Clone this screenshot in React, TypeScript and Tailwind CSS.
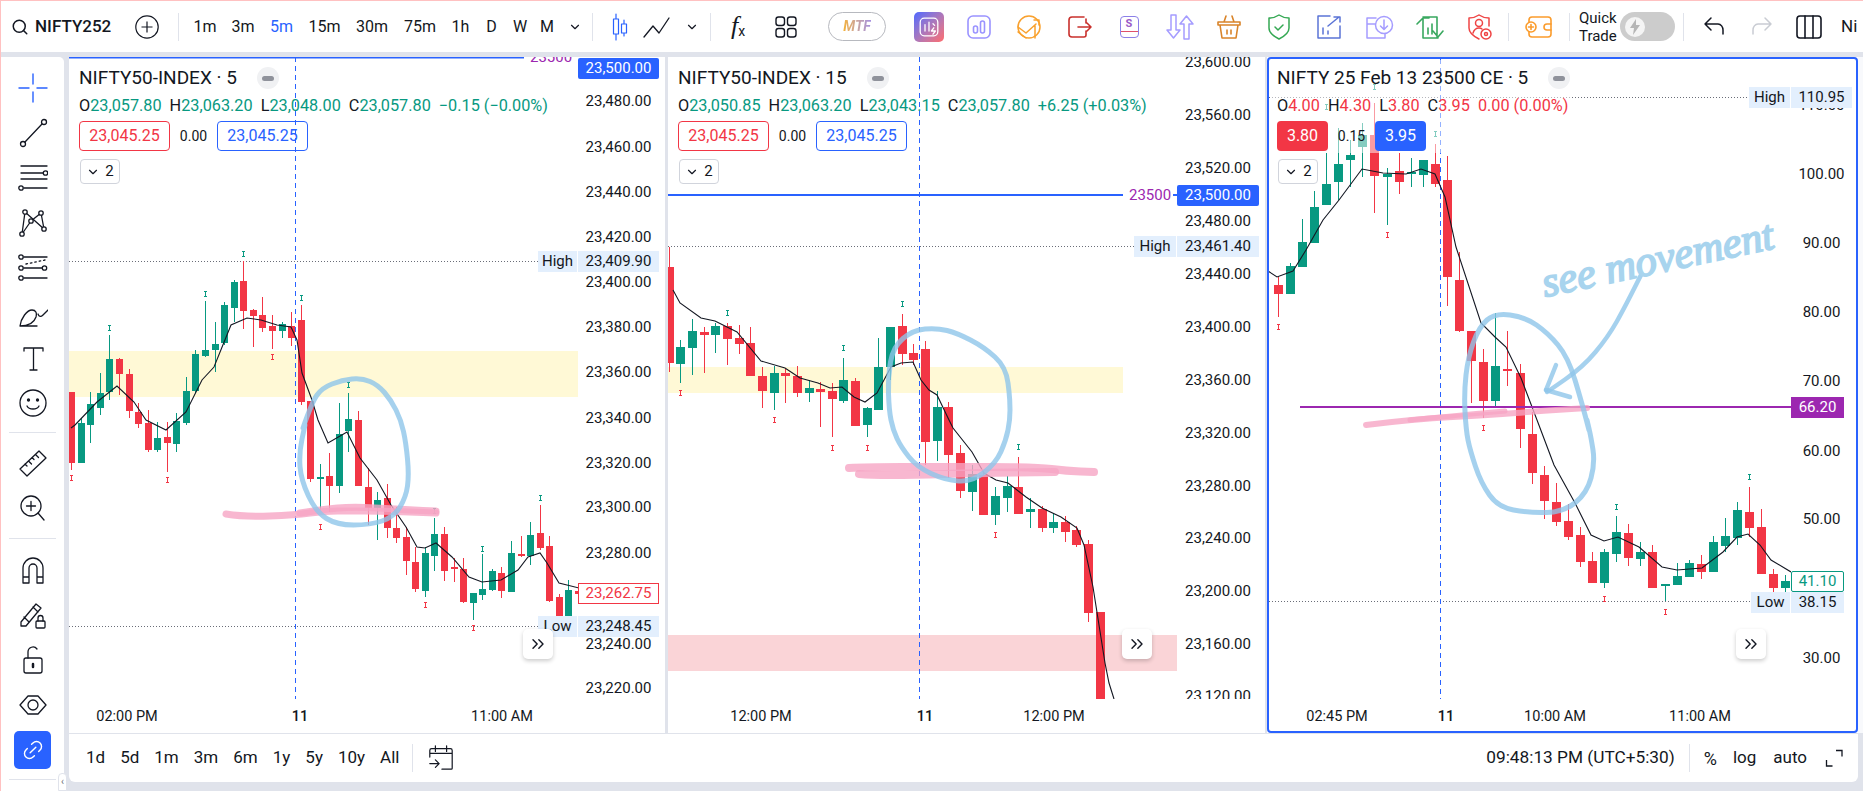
import React from 'react';
import { ChevronDown, ChevronsRight, Link2, Search } from 'lucide-react';

type Candle = [number, number, number, number, 'g' | 'r', number?];

const GREEN = '#089981';
const RED = '#f23645';
const BLUE = '#2962ff';

interface Tag {
  y: number;
  x: number;
  w: number;
  text: string;
  className: string;
}

interface PaneData {
  x: number;
  w: number;
  plotRight: number;
  candleX: number;
  step: number;
  bodyW: number;
  candles: Candle[];
  ma: string;
  ticks: [string, number][];
  tickX: number;
  tags: Tag[];
  times: [string, number, boolean?][];
  arrowBtnX: number;
}

const ma1 =
  '71,428 75,425 97,402 117,386 134,402 146,420 166,430 186,412 202,380 214,367 231,325 247,318 261,320 277,325 291,327 297,340 302,373 312,400 318,420 328,443 347,432 360,458 377,480 391,505 406,527 417,547 425,548 436,543 452,557 469,577 482,582 501,580 518,570 528,557 540,553 547,563 559,583 579,588';
const ma2 =
  '673,290 680,303 701,318 715,321 737,332 761,361 785,368 800,378 818,383 830,388 842,387 854,397 865,402 877,393 891,367 901,363 913,362 921,380 929,390 937,395 949,420 953,428 972,452 984,473 996,480 1008,483 1026,497 1042,508 1061,517 1077,528 1084,545 1093,587 1105,663 1109,683 1114,699';
const ma3 =
  '1268,271 1277,277 1293,271 1306,250 1323,220 1339,200 1362,169 1383,173 1406,174 1421,169 1435,174 1445,197 1456,247 1481,323 1495,337 1506,347 1521,378 1537,420 1554,465 1575,503 1591,535 1604,541 1618,537 1639,547 1662,567 1677,570 1702,568 1723,552 1737,537 1748,534 1760,545 1771,560 1791,572';

const candles1: Candle[] = [
  [392, 392, 463, 470, 'r', 478], [418, 423, 463, 463, 'g'], [392, 404, 425, 443, 'g'], [373, 393, 408, 415, 'g'],
  [335, 359, 392, 400, 'g', 328], [358, 359, 374, 395, 'r'], [369, 374, 411, 418, 'r'], [403, 412, 424, 428, 'r'],
  [410, 423, 450, 452, 'r'], [422, 438, 450, 452, 'g'], [422, 437, 443, 472, 'r', 480], [413, 421, 444, 452, 'g'],
  [377, 391, 423, 425, 'g'], [350, 354, 391, 393, 'g'], [301, 350, 356, 357, 'g', 294], [322, 344, 350, 372, 'g'],
  [302, 305, 343, 345, 'g'], [280, 282, 308, 322, 'g'], [261, 281, 311, 329, 'r', 254], [309, 310, 316, 347, 'r'],
  [297, 315, 328, 332, 'r'], [315, 326, 331, 349, 'r', 357], [322, 324, 331, 338, 'g'], [312, 326, 338, 346, 'r'],
  [305, 320, 402, 405, 'r', 298], [401, 401, 479, 482, 'r'], [464, 477, 478, 510, 'g', 527], [453, 476, 486, 512, 'r'],
  [403, 434, 486, 493, 'g'], [393, 419, 431, 452, 'g', 385], [411, 420, 486, 486, 'r'], [468, 487, 508, 525, 'r'],
  [492, 500, 508, 540, 'g'], [484, 498, 528, 538, 'r'], [507, 528, 538, 543, 'r'], [527, 537, 561, 575, 'r'],
  [547, 562, 589, 592, 'r'], [547, 553, 591, 597, 'g', 605], [518, 534, 556, 571, 'g', 511], [527, 534, 571, 581, 'r'],
  [558, 567, 568, 582, 'r'], [558, 569, 602, 603, 'r'], [593, 593, 603, 620, 'g', 628], [554, 589, 595, 600, 'g', 549],
  [569, 571, 590, 591, 'g'], [567, 573, 591, 598, 'r'], [541, 553, 592, 592, 'g'], [536, 554, 556, 557, 'r'],
  [522, 535, 556, 565, 'g'], [505, 533, 548, 550, 'r', 498], [536, 546, 601, 602, 'r'], [594, 597, 625, 625, 'r'],
  [580, 590, 625, 625, 'g'], [590, 591, 594, 596, 'r'],
];

const candles2: Candle[] = [
  [247, 267, 363, 372, 'r'], [340, 347, 364, 383, 'g', 393], [319, 331, 348, 375, 'g'], [327, 332, 335, 373, 'r'],
  [323, 326, 335, 353, 'g'], [323, 326, 339, 365, 'r', 313], [325, 338, 344, 354, 'r'], [327, 343, 376, 376, 'r'],
  [367, 376, 391, 408, 'r'], [366, 373, 393, 410, 'g', 420], [369, 373, 376, 403, 'r'], [366, 376, 393, 397, 'r'],
  [380, 388, 393, 402, 'g'], [382, 389, 392, 427, 'r'], [383, 391, 399, 437, 'r', 448], [358, 380, 401, 403, 'g', 348],
  [378, 381, 426, 426, 'r'], [407, 408, 425, 437, 'g', 448], [338, 367, 410, 410, 'g'], [327, 327, 367, 380, 'g'],
  [314, 326, 354, 365, 'r', 304], [344, 353, 360, 365, 'r'], [341, 349, 442, 465, 'r'], [391, 407, 441, 461, 'g'],
  [402, 407, 455, 478, 'r'], [445, 453, 491, 498, 'r'], [465, 474, 492, 511, 'g'], [473, 475, 515, 515, 'r'],
  [487, 496, 515, 525, 'g', 535], [476, 486, 498, 512, 'g'], [457, 487, 514, 514, 'r', 447], [498, 509, 512, 528, 'g'],
  [506, 509, 528, 532, 'r'], [513, 522, 528, 533, 'g'], [516, 522, 532, 542, 'r'], [526, 530, 545, 547, 'r'],
  [540, 544, 613, 622, 'r'], [612, 612, 705, 705, 'r'],
];

const candles3: Candle[] = [
  [277, 285, 294, 317, 'r', 327], [263, 266, 294, 294, 'g'], [219, 242, 267, 267, 'g'], [191, 207, 243, 243, 'g'],
  [153, 184, 205, 205, 'g', 107], [128, 164, 182, 200, 'g'], [140, 155, 160, 187, 'g'], [123, 135, 147, 177, 'g'],
  [103, 135, 176, 213, 'r', 87], [168, 174, 177, 225, 'g', 235], [153, 171, 182, 194, 'r'], [158, 172, 174, 187, 'g'],
  [160, 160, 175, 187, 'g'], [144, 164, 184, 187, 'r', 134], [156, 180, 277, 306, 'r'], [252, 280, 331, 332, 'r'],
  [331, 331, 361, 403, 'r'], [349, 362, 401, 418, 'r', 428], [313, 366, 401, 407, 'g'], [331, 369, 370, 386, 'r'],
  [364, 373, 429, 448, 'r'], [412, 434, 473, 484, 'r'], [466, 475, 501, 519, 'r'], [483, 502, 522, 526, 'r'],
  [504, 521, 537, 540, 'r'], [527, 535, 562, 567, 'r'], [552, 561, 583, 583, 'r'], [549, 552, 583, 588, 'g', 599],
  [516, 532, 554, 562, 'g', 507], [524, 533, 558, 566, 'r'], [542, 552, 559, 566, 'g'], [545, 552, 588, 588, 'r'],
  [584, 584, 586, 601, 'g', 612], [563, 576, 585, 585, 'g'], [560, 563, 577, 577, 'g'], [555, 564, 572, 579, 'r'],
  [536, 542, 572, 572, 'g'], [518, 536, 546, 552, 'g'], [502, 510, 538, 545, 'g'], [487, 512, 528, 537, 'r', 477],
  [509, 527, 574, 574, 'r'], [569, 574, 588, 592, 'r'], [575, 581, 588, 592, 'g'],
];

const tagBlue = 'bg-[#2962ff] text-white rounded-[2px]';
const tagSoft = 'bg-[#e3effd] text-[#131722]';

const panes: PaneData[] = [
  {
    x: 69, w: 596, plotRight: 578, candleX: 71.2, step: 9.56, bodyW: 7, candles: candles1, ma: ma1,
    tickX: 578,
    ticks: [['23,480.00', 101], ['23,460.00', 147], ['23,440.00', 192], ['23,420.00', 237], ['23,400.00', 282], ['23,380.00', 327], ['23,360.00', 372], ['23,340.00', 418], ['23,320.00', 463], ['23,300.00', 507], ['23,280.00', 553], ['23,240.00', 644], ['23,220.00', 688]],
    tags: [
      { y: 68, x: 578, w: 81, text: '23,500.00', className: tagBlue },
      { y: 261.5, x: 538, w: 39, text: 'High', className: tagSoft },
      { y: 261.5, x: 578, w: 81, text: '23,409.90', className: tagSoft },
      { y: 593.5, x: 578, w: 81, text: '23,262.75', className: 'bg-white text-[#f23645] border border-[#f23645]' },
      { y: 626.5, x: 538, w: 39, text: 'Low', className: tagSoft },
      { y: 626.5, x: 578, w: 81, text: '23,248.45', className: tagSoft },
    ],
    times: [['02:00 PM', 127], ['11', 300, true], ['11:00 AM', 502]],
    arrowBtnX: 523,
  },
  {
    x: 668, w: 597, plotRight: 1177, candleX: 668.7, step: 11.65, bodyW: 9, candles: candles2, ma: ma2,
    tickX: 1177,
    ticks: [['23,600.00', 62], ['23,560.00', 115], ['23,520.00', 168], ['23,480.00', 221], ['23,440.00', 274], ['23,400.00', 327], ['23,360.00', 380], ['23,320.00', 433], ['23,280.00', 486], ['23,240.00', 538], ['23,200.00', 591], ['23,160.00', 644], ['23,120.00', 696]],
    tags: [
      { y: 195.5, x: 1177, w: 82, text: '23,500.00', className: tagBlue },
      { y: 246.5, x: 1134, w: 42, text: 'High', className: tagSoft },
      { y: 246.5, x: 1177, w: 82, text: '23,461.40', className: tagSoft },
    ],
    times: [['12:00 PM', 761], ['11', 925, true], ['12:00 PM', 1054]],
    arrowBtnX: 1122,
  },
  {
    x: 1267, w: 591, plotRight: 1791, candleX: 1277.7, step: 12.09, bodyW: 9, candles: candles3, ma: ma3,
    tickX: 1791,
    ticks: [['110.00', 105], ['100.00', 174], ['90.00', 243], ['80.00', 312], ['70.00', 381], ['60.00', 451], ['50.00', 519], ['30.00', 658]],
    tags: [
      { y: 97.5, x: 1749, w: 41, text: 'High', className: tagSoft },
      { y: 97.5, x: 1791, w: 61, text: '110.95', className: tagSoft },
      { y: 407.5, x: 1791, w: 53, text: '66.20', className: 'bg-[#9c27b0] text-white' },
      { y: 581.5, x: 1791, w: 53, text: '41.10', className: 'bg-white text-[#089981] border border-[#089981] rounded-[2px]' },
      { y: 602.5, x: 1751, w: 39, text: 'Low', className: tagSoft },
      { y: 602.5, x: 1791, w: 53, text: '38.15', className: tagSoft },
    ],
    times: [['02:45 PM', 1337], ['11', 1446, true], ['10:00 AM', 1555], ['11:00 AM', 1700]],
    arrowBtnX: 1736,
  },
];

// freehand marker strokes: quadratic curves through the midpoints of the sampled points
const smooth = (pts: [number, number][]) => {
  let d = `M${pts[0][0]} ${pts[0][1]}`;
  for (let i = 1; i < pts.length - 1; i++) {
    const mx = (pts[i][0] + pts[i + 1][0]) / 2;
    const my = (pts[i][1] + pts[i + 1][1]) / 2;
    d += `Q${pts[i][0]} ${pts[i][1]} ${mx} ${my}`;
  }
  const last = pts[pts.length - 1];
  return `${d}L${last[0]} ${last[1]}`;
};

const InkBlue: React.FC<{ pts: [number, number][]; w?: number }> = ({ pts, w = 5 }) => (
  <path d={smooth(pts)} fill="none" stroke="#8ec5ea" strokeOpacity={0.8} strokeWidth={w} strokeLinecap="round" strokeLinejoin="round" />
);

const InkPink: React.FC<{ pts: [number, number][]; w?: number }> = ({ pts, w = 8 }) => (
  <path d={smooth(pts)} fill="none" stroke="#f6a5c4" strokeOpacity={0.8} strokeWidth={w} strokeLinecap="round" strokeLinejoin="round" />
);

const Candles: React.FC<{ pane: PaneData }> = ({ pane }) => (
  <>
    {pane.candles.map((c, i) => {
      const [high, top, bottom, low, dir, mark] = c;
      const cx = Math.round(pane.candleX + pane.step * i);
      const color = dir === 'g' ? GREEN : RED;
      const markColor = mark !== undefined && mark < high ? GREEN : RED;
      return (
        <g key={i}>
          <line x1={cx + 0.5} x2={cx + 0.5} y1={high} y2={low} stroke={color} />
          <rect x={cx + 0.5 - pane.bodyW / 2} y={top} width={pane.bodyW} height={Math.max(bottom - top, 2)} fill={color} />
          {mark !== undefined && (
            <path d={`M${cx - 1} ${mark - 2.5}h3M${cx + 0.5} ${mark - 2.5}v5M${cx - 1} ${mark + 2.5}h3`} stroke={markColor} fill="none" />
          )}
        </g>
      );
    })}
  </>
);

const Dotted: React.FC<{ y: number; x1: number; x2: number }> = ({ y, x1, x2 }) => (
  <line x1={x1} x2={x2} y1={y + 0.5} y2={y + 0.5} stroke="#6a6d78" strokeDasharray="1 2" />
);

const Plot1: React.FC = () => {
  const pane = panes[0];
  return (
    <>
      <rect x={69} y={351} width={509} height={46} fill="#fff9d6" />
      <line x1={69} x2={524} y1={57.5} y2={57.5} stroke={BLUE} strokeWidth={2} />
      <Dotted y={261} x1={69} x2={538} />
      <Dotted y={626} x1={69} x2={538} />
      <line x1={295.5} x2={295.5} y1={57} y2={699} stroke={BLUE} strokeDasharray="5 4" />
      <Candles pane={pane} />
      <polyline points={pane.ma} fill="none" stroke="#131722" strokeWidth={1.1} />
      <InkPink pts={[[226, 514], [244, 517], [295, 515], [325, 511], [350, 511], [380, 511], [410, 512], [436, 513]]} w={7} />
      <InkPink pts={[[300, 513], [325, 509], [350, 507], [380, 508], [410, 510], [436, 511]]} w={7} />
      <InkBlue pts={[[303, 428], [312, 402], [322, 388], [342, 380], [362, 378], [378, 385], [391, 400], [401, 420], [406, 443], [409, 475], [406, 497], [394, 517], [370, 525], [337, 525], [316, 512], [301, 480], [299, 453], [305, 425]]} />
    </>
  );
};

const Plot2: React.FC = () => {
  const pane = panes[1];
  return (
    <>
      <rect x={668} y={367} width={455} height={26} fill="#fff9d6" />
      <rect x={668} y={635} width={509} height={36} fill="#fad4d7" />
      <line x1={668} x2={1123} y1={195} y2={195} stroke={BLUE} strokeWidth={2} />
      <line x1={1173} x2={1177} y1={195} y2={195} stroke={BLUE} strokeWidth={2} />
      <Dotted y={246} x1={668} x2={1134} />
      <line x1={919.5} x2={919.5} y1={57} y2={699} stroke={BLUE} strokeDasharray="5 4" />
      <Candles pane={pane} />
      <polyline points={pane.ma} fill="none" stroke="#131722" strokeWidth={1.1} />
      <InkPink pts={[[849, 468], [866, 467], [937, 467], [1036, 467], [1067, 471], [1094, 472]]} w={8} />
      <InkPink pts={[[859, 474], [870, 475], [913, 475], [976, 473], [1055, 472]]} w={8} />
      <InkBlue pts={[[1008, 383], [1006, 367], [984, 347], [957, 333], [937, 328], [913, 330], [893, 347], [888, 377], [889, 410], [893, 430], [901, 447], [917, 467], [945, 480], [972, 482], [996, 463], [1006, 440], [1010, 420], [1010, 400], [1008, 383]]} />
      <text x={1129} y={200} fontSize={15} fill="#9c27b0" fontFamily="Roboto, sans-serif">
        23500
      </text>
    </>
  );
};

const Plot3: React.FC = () => {
  const pane = panes[2];
  return (
    <>
      <Dotted y={97} x1={1269} x2={1749} />
      <Dotted y={601} x1={1269} x2={1751} />
      <line x1={1440.5} x2={1440.5} y1={59} y2={699} stroke={BLUE} strokeDasharray="5 4" />
      <Candles pane={pane} />
      <rect x={1272} y={60} width={300} height={93} fill="#ffffff" fillOpacity={0.5} />
      <polyline points={pane.ma} fill="none" stroke="#131722" strokeWidth={1.1} />
      <line x1={1300} x2={1791} y1={407} y2={407} stroke="#9c27b0" strokeWidth={2} />
      <InkPink pts={[[1366, 425], [1414, 419], [1491, 415], [1540, 411], [1587, 408]]} w={6} />
      <InkPink pts={[[1410, 420], [1470, 414], [1505, 411]]} w={5} />
      <InkBlue pts={[[1589, 430], [1582, 403], [1568, 357], [1548, 333], [1525, 317], [1495, 313], [1479, 327], [1468, 357], [1464, 393], [1466, 430], [1470, 450], [1481, 483], [1498, 507], [1529, 513], [1564, 512], [1587, 493], [1595, 463], [1591, 437], [1587, 420]]} />
      <InkBlue pts={[[1641, 275], [1625, 307], [1608, 337], [1583, 367], [1547, 392]]} w={4.5} />
      <InkBlue pts={[[1556, 365], [1546, 390]]} w={4.5} />
      <InkBlue pts={[[1546, 390], [1570, 397]]} w={4.5} />
      <text
        x={1545}
        y={297}
        transform="rotate(-12 1545 297)"
        fontSize={42}
        fontStyle="italic"
        fontFamily="'Liberation Serif', serif"
        fill="#a8d4ee"
        stroke="#a8d4ee"
        strokeWidth={1.8}
        textLength={236}
        lengthAdjust="spacingAndGlyphs"
      >
        see movement
      </text>
    </>
  );
};

const legendValue = 'text-[#089981]';

const LegendRow: React.FC<{ items: [string, string][]; change: string; color: string }> = ({ items, change, color }) => (
  <div className="flex h-[22px] items-center gap-[8px] whitespace-nowrap text-[16.25px]">
    {items.map(([k, v]) => (
      <span key={k}>
        {k}
        <span className={color}>{v}</span>
      </span>
    ))}
    <span className={color}>{change}</span>
  </div>
);

const Legend: React.FC<{ title: string; row: React.ReactNode; boxes: React.ReactNode }> = ({ title, row, boxes }) => (
  <div className="absolute left-[10px] top-[8px] flex flex-col items-start">
    <div className="flex h-[26px] items-center gap-[20px] whitespace-nowrap">
      <span className="text-[19px] leading-[26px]">{title}</span>
      <span className="flex h-[22px] w-[22px] items-center justify-center rounded-full bg-[#f0f1f3]">
        <span className="h-[5px] w-[12px] rounded-full bg-[#8f929b]" />
      </span>
    </div>
    <div className="mt-[4px]">{row}</div>
    <div className="mt-[4px] flex h-[30px] items-center">{boxes}</div>
    <div className="mt-[8px] ml-[1px] flex h-[25px] w-[40px] items-center justify-center gap-[5px] rounded-[4px] border border-[#d1d4dc] bg-white text-[15px]">
      <ChevronDown size={14} />2
    </div>
  </div>
);

const OutlineBoxes: React.FC = () => (
  <>
    <span className="flex h-[30px] w-[91px] items-center justify-center rounded-[4px] border border-[#f23645] text-[16px] text-[#f23645]">23,045.25</span>
    <span className="w-[47px] text-center text-[14px]">0.00</span>
    <span className="flex h-[30px] w-[91px] items-center justify-center rounded-[4px] border border-[#2962ff] text-[16px] text-[#2962ff]">23,045.25</span>
  </>
);

const ArrowButton: React.FC<{ left: number }> = ({ left }) => (
  <div
    className="absolute top-[572px] flex h-[30px] w-[30px] items-center justify-center rounded-[5px] bg-white shadow-[0_2px_4px_rgba(0,0,0,0.2)]"
    style={{ left }}
  >
    <ChevronsRight size={20} strokeWidth={1.7} />
  </div>
);

const Pane: React.FC<{ pane: PaneData; plot: React.ReactNode; legend: React.ReactNode; extra?: React.ReactNode; active?: boolean }> = ({ pane, plot, legend, extra, active }) => (
  <div className="relative flex h-full flex-col bg-white" style={{ width: pane.w }}>
    <div className="relative h-[642px] overflow-hidden">
      <svg
        className="absolute left-0 top-0"
        width={pane.plotRight - pane.x}
        height={642}
        viewBox={`${pane.x} 57 ${pane.plotRight - pane.x} 642`}
      >
        {plot}
      </svg>
      {pane.ticks.map(([label, y]) => (
        <div
          key={label}
          className="absolute flex h-[20px] items-center justify-center text-[15px] leading-none"
          style={{ left: pane.tickX - pane.x, top: y - 67, width: pane.w - (pane.tickX - pane.x) - 6 }}
        >
          {label}
        </div>
      ))}
      {pane.tags.map((t) => (
        <div
          key={t.text}
          className={`absolute flex h-[21px] items-center justify-center text-[15px] leading-none ${t.className}`}
          style={{ left: t.x - pane.x, top: t.y - 57 - 10.5, width: t.w }}
        >
          {t.text}
        </div>
      ))}
      {legend}
      {extra}
      <ArrowButton left={pane.arrowBtnX - pane.x} />
    </div>
    <div className="relative flex-1">
      {pane.times.map(([label, cx, bold]) => (
        <span
          key={`${label}${cx}`}
          className={`absolute top-[8px] -translate-x-1/2 whitespace-nowrap text-[14.5px] leading-[20px] ${bold ? 'font-medium' : ''}`}
          style={{ left: cx - pane.x }}
        >
          {label}
        </span>
      ))}
    </div>
    {active && <div className="pointer-events-none absolute inset-0 rounded-[4px] border-2 border-[#2962ff]" />}
  </div>
);

const Sep: React.FC<{ className?: string }> = ({ className = '' }) => <div className={`h-[28px] w-px bg-[#e0e3eb] ${className}`} />;

const TfButton: React.FC<{ w: string; active?: boolean; children: React.ReactNode }> = ({ w, active, children }) => (
  <div className={`flex h-[28px] shrink-0 items-center justify-center text-[16px] ${w} ${active ? 'text-[#2962ff]' : ''}`}>{children}</div>
);

const Ico: React.FC<{ size?: number; color?: string; width?: number; children: React.ReactNode }> = ({ size = 30, color = '#131722', width = 1.3, children }) => (
  <svg width={size} height={size} viewBox="0 0 30 30" fill="none" stroke={color} strokeWidth={width} strokeLinecap="round" strokeLinejoin="round">
    {children}
  </svg>
);

const IcoBox: React.FC<{ children: React.ReactNode }> = ({ children }) => <div className="flex h-[30px] w-[50px] shrink-0 items-center justify-center">{children}</div>;

const TopBar: React.FC = () => (
  <div className="flex h-[51px] shrink-0 items-center bg-white">
    <Search size={18} strokeWidth={2} className="ml-[10px]" />
    <span className="ml-[6px] w-[80px] text-[17px] font-medium">NIFTY252</span>
    <svg className="ml-[20px]" width={24} height={24} viewBox="0 0 24 24" fill="none" stroke="#131722" strokeWidth={1.2}>
      <circle cx="12" cy="12" r="11.2" />
      <path d="M12 6.5v11M6.5 12h11" />
    </svg>
    <Sep className="ml-[19px]" />
    <div className="ml-[7px] flex items-center">
      <TfButton w="w-[38px]">1m</TfButton>
      <TfButton w="w-[38px]">3m</TfButton>
      <TfButton w="w-[39px]" active>5m</TfButton>
      <TfButton w="w-[47px]">15m</TfButton>
      <TfButton w="w-[48px]">30m</TfButton>
      <TfButton w="w-[48px]">75m</TfButton>
      <TfButton w="w-[33px]">1h</TfButton>
      <TfButton w="w-[29px]">D</TfButton>
      <TfButton w="w-[28px]">W</TfButton>
      <TfButton w="w-[26px]">M</TfButton>
      <TfButton w="w-[30px]"><ChevronDown size={14} /></TfButton>
    </div>
    <Sep className="ml-[2px]" />
    <div className="ml-[9px] flex h-[36px] w-[36px] items-center justify-center">
      <Ico color={BLUE} width={1.2}>
        <path d="M11 2v5M8.5 7h5v15h-5zM11 22v6M19 8v4M16.5 12h5v9h-5zM19 21v3" />
      </Ico>
    </div>
    <div className="flex h-[36px] w-[36px] items-center justify-center">
      <Ico>
        <path d="M3 25L12 14 18 21 28 6" />
      </Ico>
    </div>
    <div className="flex h-[36px] w-[36px] items-center justify-center">
      <ChevronDown size={14} />
    </div>
    <Sep />
    <div className="ml-[9px] flex h-[36px] w-[36px] items-center justify-center pb-[2px]">
      <span className="text-[26px] italic leading-none [font-family:'Liberation_Serif',serif]">f</span>
      <span className="mt-[10px] text-[14px] leading-none">x</span>
    </div>
    <div className="ml-[12px] flex h-[36px] w-[36px] items-center justify-center">
      <Ico width={1.4}>
        <rect x="5" y="5" width="8.5" height="8.5" rx="2.5" />
        <rect x="16.5" y="5" width="8.5" height="8.5" rx="2.5" />
        <rect x="5" y="16.5" width="8.5" height="8.5" rx="2.5" />
        <rect x="16.5" y="16.5" width="8.5" height="8.5" rx="2.5" />
      </Ico>
    </div>
    <div className="ml-[24px] flex h-[29px] w-[58px] items-center justify-center rounded-full border-[1.5px] border-[#b7b9bf]">
      <span className="bg-linear-to-r from-[#f4b12a] to-[#a48fe0] bg-clip-text text-[14px] font-bold italic text-transparent">MTF</span>
    </div>
    <div className="ml-[18px] flex items-center">
      <IcoBox>
        <div className="flex h-[30px] w-[30px] items-center justify-center rounded-[5px] bg-linear-to-br from-[#4d66ff] to-[#ff6a6a]">
          <Ico size={24} color="#ffffff" width={1.6}>
            <rect x="4" y="4" width="22" height="22" rx="5" />
            <path d="M10 20v-8M15 20V9M20 11l2 2M21 16l-3 4h5l-3 4" />
          </Ico>
        </div>
      </IcoBox>
      <IcoBox>
        <Ico color="#9a93ff" width={1.6}>
          <rect x="4" y="4" width="22" height="22" rx="5" />
          <rect x="9.5" y="14" width="4" height="7" rx="2" />
          <rect x="16.5" y="9" width="4" height="12" rx="2" />
        </Ico>
      </IcoBox>
      <IcoBox>
        <Ico color="#f9a12e" width={1.5}>
          <circle cx="15" cy="15" r="11" />
          <path d="M4 15l8 6 10-9M4 20l8 6M20 8h5v5M21 26v-12" />
        </Ico>
      </IcoBox>
      <IcoBox>
        <Ico color="#c9302c" width={1.6}>
          <path d="M20 5H8a3 3 0 0 0-3 3v14a3 3 0 0 0 3 3h12a2 2 0 0 0 2-2v-4M22 11V7M14 15h13M23 11l4 4-4 4" />
        </Ico>
      </IcoBox>
      <IcoBox>
        <div className="relative h-[22px] w-[19px] overflow-hidden rounded-[4px] border-[1.5px] border-[#8c80e8]">
          <span className="absolute inset-x-0 top-0 text-center text-[11px] font-bold leading-[14px] text-[#9a5cc8]">S</span>
          <div className="absolute inset-x-0 top-[14px] h-[1.5px] bg-[#e0506a]" />
        </div>
      </IcoBox>
      <IcoBox>
        <Ico color="#a59cff" width={1.5}>
          <path d="M7 3h5v15h4l-6.5 8L3 18h4zM20 27V12h-4l6.5-8L29 12h-4v15z" />
        </Ico>
      </IcoBox>
      <IcoBox>
        <Ico color="#d9842a" width={1.6}>
          <path d="M4 10h22v3H4zM6 13l2 13h14l2-13M10 10l2-6M20 10l-2-6M13 18v4M17 18v4" />
        </Ico>
      </IcoBox>
      <IcoBox>
        <Ico color="#34a853" width={1.5}>
          <path d="M15 3c3 2 6 3 10 3v10c0 5-4 8-10 11C9 24 5 21 5 16V6c4 0 7-1 10-3zM11 15l3 3 5-5" />
        </Ico>
      </IcoBox>
      <IcoBox>
        <Ico color="#5b74d6" width={1.5}>
          <path d="M16 4H4v22h22V14M9 22v-6M14 22v-3M14 14L25 5M20 5h6v5" />
        </Ico>
      </IcoBox>
      <IcoBox>
        <Ico color="#a59cff" width={1.5}>
          <path d="M12 6H3v20h18v-4M3 12h8" />
          <circle cx="20" cy="13" r="8.5" />
          <path d="M20 8v9M16.5 14l3.5 3.5 3.5-3.5" />
        </Ico>
      </IcoBox>
      <IcoBox>
        <Ico color="#39a85f" width={1.6}>
          <path d="M9 7V26h15M3 12l6-6 6 0M9 5h14v20M19 19l5 6 5-6M14 22v-6M18 22V12" />
        </Ico>
      </IcoBox>
      <IcoBox>
        <Ico color="#ef4444" width={1.5}>
          <path d="M15 3c3 2 6 3 10 3v8M15 27C9 24 5 21 5 16V6c4 0 7-1 10-3" />
          <circle cx="15" cy="11" r="3.5" />
          <path d="M9 21c1-3 3-5 6-5 1 0 2 0 3 1" />
          <circle cx="22" cy="22" r="5" />
          <circle cx="22" cy="22" r="1.5" />
        </Ico>
      </IcoBox>
    </div>
    <Sep className="ml-[4px]" />
    <div className="ml-[15px] flex w-[30px] items-center justify-center">
      <Ico color="#fb9c2c" width={1.6}>
        <rect x="5" y="5" width="22" height="20" rx="3" />
        <circle cx="7" cy="15" r="5" fill="#ffffff" />
        <path d="M7 12.5v5M4.5 15h5M27 12h-4a3 3 0 0 0 0 6h4" />
      </Ico>
    </div>
    <Sep className="ml-[15px]" />
    <div className="ml-[9px] w-[41px] text-[15px] leading-[18px]">
      Quick
      <br />
      Trade
    </div>
    <div className="flex h-[29px] w-[55px] items-center rounded-full bg-[#cccccc] pl-[5px]">
      <span className="flex h-[20px] w-[20px] items-center justify-center rounded-full bg-[#f4f4f4]">
        <svg width={12} height={16} viewBox="0 0 12 16" fill="#b5b5b5">
          <path d="M7 0L1 9h4l-1 7 7-10H7z" />
        </svg>
      </span>
    </div>
    <Sep className="ml-[8px]" />
    <div className="ml-[15px] flex w-[30px] justify-center">
      <Ico width={1.5}>
        <path d="M6 12h13c3 0 5 3 5 6v4M6 12l6-6M6 12l6 6" />
      </Ico>
    </div>
    <div className="ml-[18px] flex w-[30px] justify-center">
      <Ico color="#c9ccd3" width={1.5}>
        <path d="M24 12H11c-3 0-5 3-5 6v4M24 12l-6-6M24 12l-6 6" />
      </Ico>
    </div>
    <div className="ml-[17px] flex w-[30px] justify-center">
      <Ico width={1.6}>
        <rect x="3" y="4" width="24" height="22" rx="3" />
        <path d="M11 4v22M19 4v22" />
      </Ico>
    </div>
    <span className="ml-[17px] text-[17px]">Ni</span>
  </div>
);

const toolIcons: React.ReactNode[] = [
  <Ico key="cross" color={BLUE} width={1.4}>
    <path d="M15 1v10M15 19v10M1 15h10M19 15h10" />
  </Ico>,
  <Ico key="line">
    <circle cx="5" cy="26" r="2.5" />
    <circle cx="26" cy="4" r="2.5" />
    <path d="M7 24L24 6" />
  </Ico>,
  <Ico key="channel">
    <path d="M3 3h26M3 10h22M3 16h26M6 25h23" />
    <circle cx="27.5" cy="10" r="2.2" />
    <circle cx="3" cy="25" r="2.2" />
  </Ico>,
  <Ico key="pattern">
    <path d="M4 26L7 4 26 21 23 5 13 13 4 26" />
    <circle cx="4" cy="26" r="2.2" fill="#ffffff" />
    <circle cx="7" cy="4" r="2.2" fill="#ffffff" />
    <circle cx="26" cy="21" r="2.2" fill="#ffffff" />
    <circle cx="23" cy="5" r="2.2" fill="#ffffff" />
    <circle cx="13" cy="13" r="2.2" fill="#ffffff" />
  </Ico>,
  <Ico key="fib">
    <circle cx="3" cy="4" r="2.2" />
    <circle cx="3" cy="15" r="2.2" />
    <circle cx="3" cy="25" r="2.2" />
    <circle cx="26.5" cy="15" r="2.2" />
    <path d="M6 4h23M6 15h18M6 25h23" />
    <path d="M8 11L27 7" strokeDasharray="1.5 3" />
  </Ico>,
  <Ico key="brush">
    <path d="M2 28C3 20 9 12 14 12c4 0 5 3 4 7-2 6-7 9-16 9h17M20 16c1 3 3 3 5 1l5-5" />
  </Ico>,
  <Ico key="text">
    <path d="M6 5h19M6 5v3M25 5v3M15.5 5v22M12 27h7" />
  </Ico>,
  <Ico key="smile">
    <circle cx="15" cy="15" r="13" />
    <path d="M9 18c2 4 10 4 12 0" />
    <circle cx="10.5" cy="12" r="1" fill="#131722" />
    <circle cx="19.5" cy="12" r="1" fill="#131722" />
  </Ico>,
];

const ToolRow: React.FC<{ children: React.ReactNode; className?: string }> = ({ children, className = '' }) => (
  <div className={`flex h-[45px] shrink-0 items-center justify-center ${className}`}>{children}</div>
);

const LeftBar: React.FC = () => (
  <div className="relative flex h-full w-[63px] shrink-0 flex-col items-stretch rounded-tr-[5px] bg-white pt-[8px]">
    {toolIcons.map((ic, i) => (
      <ToolRow key={i}>{ic}</ToolRow>
    ))}
    <div className="mx-[8px] mt-[7px] h-px bg-[#e0e3eb]" />
    <ToolRow className="mt-[7px]">
      <Ico>
        <path d="M2 21L21 3l7 7L9 28zM7 16l2 2M10.5 13l3 3M14 9.5l2 2M17.5 6.5l3 3" />
      </Ico>
    </ToolRow>
    <ToolRow>
      <Ico>
        <circle cx="13" cy="13" r="10" />
        <path d="M13 8.5v9M8.5 13h9M20 20l6 7" />
      </Ico>
    </ToolRow>
    <div className="mx-[8px] mt-[8px] h-px bg-[#e0e3eb]" />
    <ToolRow className="mt-[8px]">
      <Ico>
        <path d="M5 28V13a10 10 0 0 1 20 0v15h-6V13a4 4 0 0 0-8 0v15zM5 22h6M19 22h6" />
      </Ico>
    </ToolRow>
    <ToolRow>
      <Ico>
        <path d="M3 22L18 4l5 4L8 26H3zM6 17l5 5M15 7l5 5" />
        <rect x="18" y="21" width="9" height="7" rx="1" />
        <path d="M20 21v-3a2.5 2.5 0 0 1 5 0v3" />
      </Ico>
    </ToolRow>
    <ToolRow>
      <Ico>
        <rect x="6" y="13" width="18" height="15" rx="2" />
        <path d="M10 13V7a5 5 0 0 1 9-3" />
        <path d="M15 19v3" strokeWidth={2.5} />
      </Ico>
    </ToolRow>
    <ToolRow>
      <Ico>
        <path d="M2 15l8-9h10l8 9-8 9H10z" />
        <circle cx="15" cy="15" r="5" />
      </Ico>
    </ToolRow>
    <ToolRow>
      <div className="flex h-[38px] w-[37px] items-center justify-center rounded-[5px] bg-[#2962ff]">
        <Link2 size={24} color="#ffffff" strokeWidth={1.4} className="-rotate-45" />
      </div>
    </ToolRow>
    <div className="mx-[8px] mt-[7px] h-px bg-[#e0e3eb]" />
    <div className="absolute bottom-0 right-[-3px] flex h-[18px] w-[9px] items-center justify-center rounded-t-[4px] border border-[#e0e3eb] bg-white text-[10px] leading-none text-[#6a6d78]">
      ‹
    </div>
  </div>
);

const BottomBar: React.FC = () => (
  <div className="mt-px flex h-[48px] w-[1789px] items-center rounded-b-[6px] bg-white pl-[17px] text-[17px]">
    <div className="flex items-center gap-[15px]">
      <span>1d</span>
      <span>5d</span>
      <span>1m</span>
      <span>3m</span>
      <span>6m</span>
      <span>1y</span>
      <span>5y</span>
      <span>10y</span>
      <span>All</span>
    </div>
    <Sep className="ml-[13px]" />
    <div className="ml-[14px]">
      <Ico size={28}>
        <path d="M3 14V7a2 2 0 0 1 2-2h20a2 2 0 0 1 2 2v19a1 1 0 0 1-1 1H16M3 10h24M9 2v6M21 2v6M3 21h9M9 17l4 4-4 4" />
      </Ico>
    </div>
    <div className="ml-auto flex items-center">
      <span className="text-[17.25px]">09:48:13 PM (UTC+5:30)</span>
      <Sep className="ml-[14px]" />
      <span className="ml-[14px] text-[18px]">%</span>
      <span className="ml-[16px]">log</span>
      <span className="ml-[17px]">auto</span>
      <svg className="ml-[18px] mr-[15px]" width={18} height={18} viewBox="0 0 18 18" fill="none" stroke="#131722" strokeWidth={1.3}>
        <path d="M11 1.5h6v6M1.5 11v6h6" />
      </svg>
    </div>
  </div>
);

export default function App() {
  return (
    <div className="flex h-[791px] w-[1863px] flex-col overflow-hidden border-l border-t border-[#ffc1c1] bg-[#e0e3eb] text-[#131722] [font-family:Roboto,sans-serif]">
      <TopBar />
      <div className="mt-[5px] flex min-h-0 flex-1">
        <LeftBar />
        <div className="ml-[5px] flex flex-1 flex-col">
          <div className="flex h-[676px] shrink-0">
            <Pane
              pane={panes[0]}
              plot={<Plot1 />}
              legend={
                <Legend
                  title="NIFTY50-INDEX · 5"
                  row={
                    <LegendRow
                      color={legendValue}
                      change="−0.15 (−0.00%)"
                      items={[['O', '23,057.80'], ['H', '23,063.20'], ['L', '23,048.00'], ['C', '23,057.80']]}
                    />
                  }
                  boxes={<OutlineBoxes />}
                />
              }
              extra={
                <span className="absolute left-[461px] top-[-8px] text-[15px] leading-[16px] text-[#9c27b0]">23500</span>
              }
            />
            <div className="w-[3px]" />
            <Pane
              pane={panes[1]}
              plot={<Plot2 />}
              legend={
                <Legend
                  title="NIFTY50-INDEX · 15"
                  row={
                    <LegendRow
                      color={legendValue}
                      change="+6.25 (+0.03%)"
                      items={[['O', '23,050.85'], ['H', '23,063.20'], ['L', '23,043.15'], ['C', '23,057.80']]}
                    />
                  }
                  boxes={<OutlineBoxes />}
                />
              }
            />
            <div className="w-[2px]" />
            <Pane
              active
              pane={panes[2]}
              plot={<Plot3 />}
              legend={
                <Legend
                  title="NIFTY 25 Feb 13 23500 CE · 5"
                  row={
                    <LegendRow
                      color="text-[#f23645]"
                      change="0.00 (0.00%)"
                      items={[['O', '4.00'], ['H', '4.30'], ['L', '3.80'], ['C', '3.95']]}
                    />
                  }
                  boxes={
                    <>
                      <span className="flex h-[30px] w-[51px] items-center justify-center rounded-[4px] bg-[#f23645] text-[16px] text-white">3.80</span>
                      <span className="w-[47px] text-center text-[14px]">0.15</span>
                      <span className="flex h-[30px] w-[51px] items-center justify-center rounded-[4px] bg-[#2962ff] text-[16px] text-white">3.95</span>
                    </>
                  }
                />
              }
              extra={
                <svg className="absolute left-[546px] top-[648px]" width={24} height={24} viewBox="0 0 24 24" fill="none" stroke="#131722" strokeWidth={1.3}>
                  <path d="M12 3l9.5 9-5 8H7.5l-5-8z" />
                  <circle cx="12" cy="12" r="2.5" />
                </svg>
              }
            />
            <div className="flex-1 bg-[#f8f9fc]" />
          </div>
          <BottomBar />
        </div>
      </div>
    </div>
  );
}
